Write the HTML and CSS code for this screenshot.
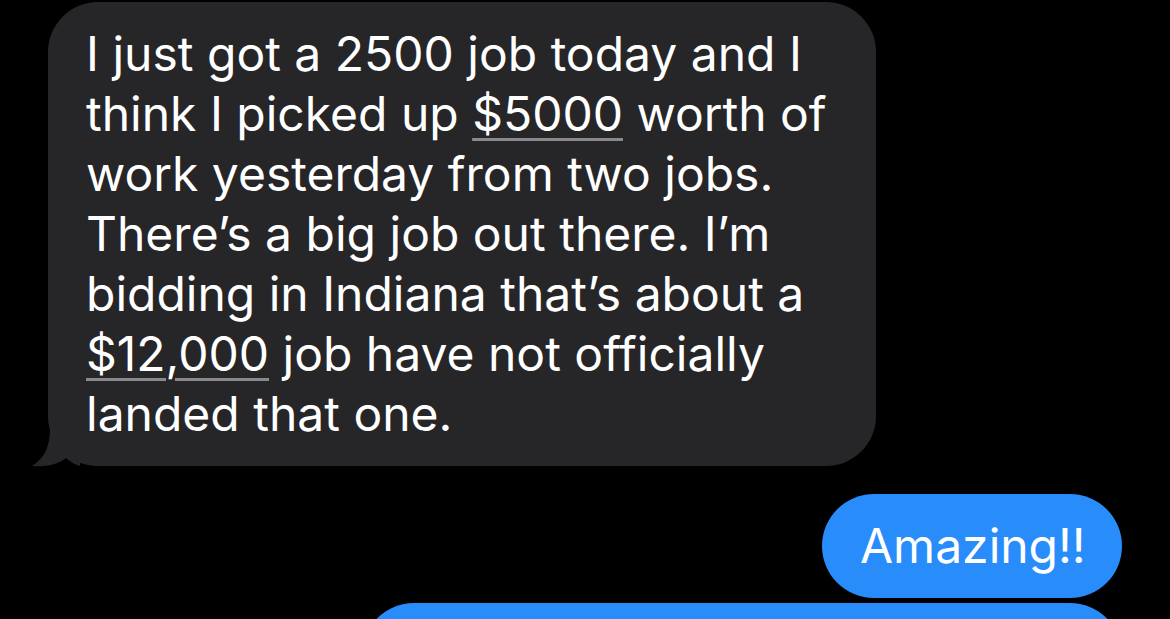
FILE: index.html
```html
<!DOCTYPE html>
<html lang="en">
<head>
<meta charset="utf-8">
<title>Messages</title>
<link rel="stylesheet" href="styles.css">
</head>
<body>
<main class="thread">
  <div class="msg msg-in">
    <div class="bubble bubble-in">
      <p class="text">I just got a 2500 job today and I think I picked up <span class="link">$5000</span> worth of work yesterday from two jobs. There’s a big job out there. I’m bidding in Indiana that’s about a <span class="link">$12,000</span> job have not officially landed that one.</p>
      <svg class="tail" width="48" height="40" viewBox="0 0 48 40" aria-hidden="true">
        <path d="M18 0 C18 18 14 30 0 39 C12 40 26 38 34 31 C40 36 44 38 48 39 L48 0 Z" fill="#262629"/>
      </svg>
    </div>
  </div>
  <div class="msg msg-out">
    <div class="bubble bubble-out">
      <p class="text">Amazing!!</p>
    </div>
  </div>
  <div class="msg msg-out">
    <div class="bubble bubble-out bubble-next"></div>
  </div>
</main>
</body>
</html>
```
FILE: styles.css
```css
html, body {
  margin: 0;
  padding: 0;
  background: #000;
  height: 100%;
  overflow: hidden;
}

.thread {
  display: flex;
  flex-direction: column;
  padding-top: 2px;
  font-family: Inter, "Liberation Sans", sans-serif;
  color: #fff;
}

.msg {
  display: flex;
}

.msg-out {
  justify-content: flex-end;
  padding-right: 48px;
}

.msg-in {
  padding-left: 48px;
}

.bubble {
  position: relative;
  box-sizing: border-box;
}

.text {
  margin: 0;
  font-size: 48px;
  line-height: 60px;
  letter-spacing: 0;
}

.bubble-in {
  width: 828px;
  background: #262629;
  border-radius: 50px;
  padding: 22px 30px 22px 38px;
}

.link {
  text-decoration: underline;
  text-decoration-color: #8a8a8e;
  text-decoration-thickness: 3px;
  text-underline-offset: 7px;
}

.tail {
  position: absolute;
  left: -16px;
  bottom: -1px;
}

.bubble-out {
  background: #288cfa;
  border-radius: 52px;
}

.msg-out + .msg-out {
  margin-top: 5px;
}

.msg-in + .msg-out {
  margin-top: 28px;
}

.bubble-out .text {
  height: 104px;
  display: flex;
  align-items: center;
  padding: 0 38px;
  box-sizing: border-box;
}

.bubble-out:not(.bubble-next) {
  width: 300px;
}

.bubble-next {
  width: 760px;
  height: 104px;
}
```
